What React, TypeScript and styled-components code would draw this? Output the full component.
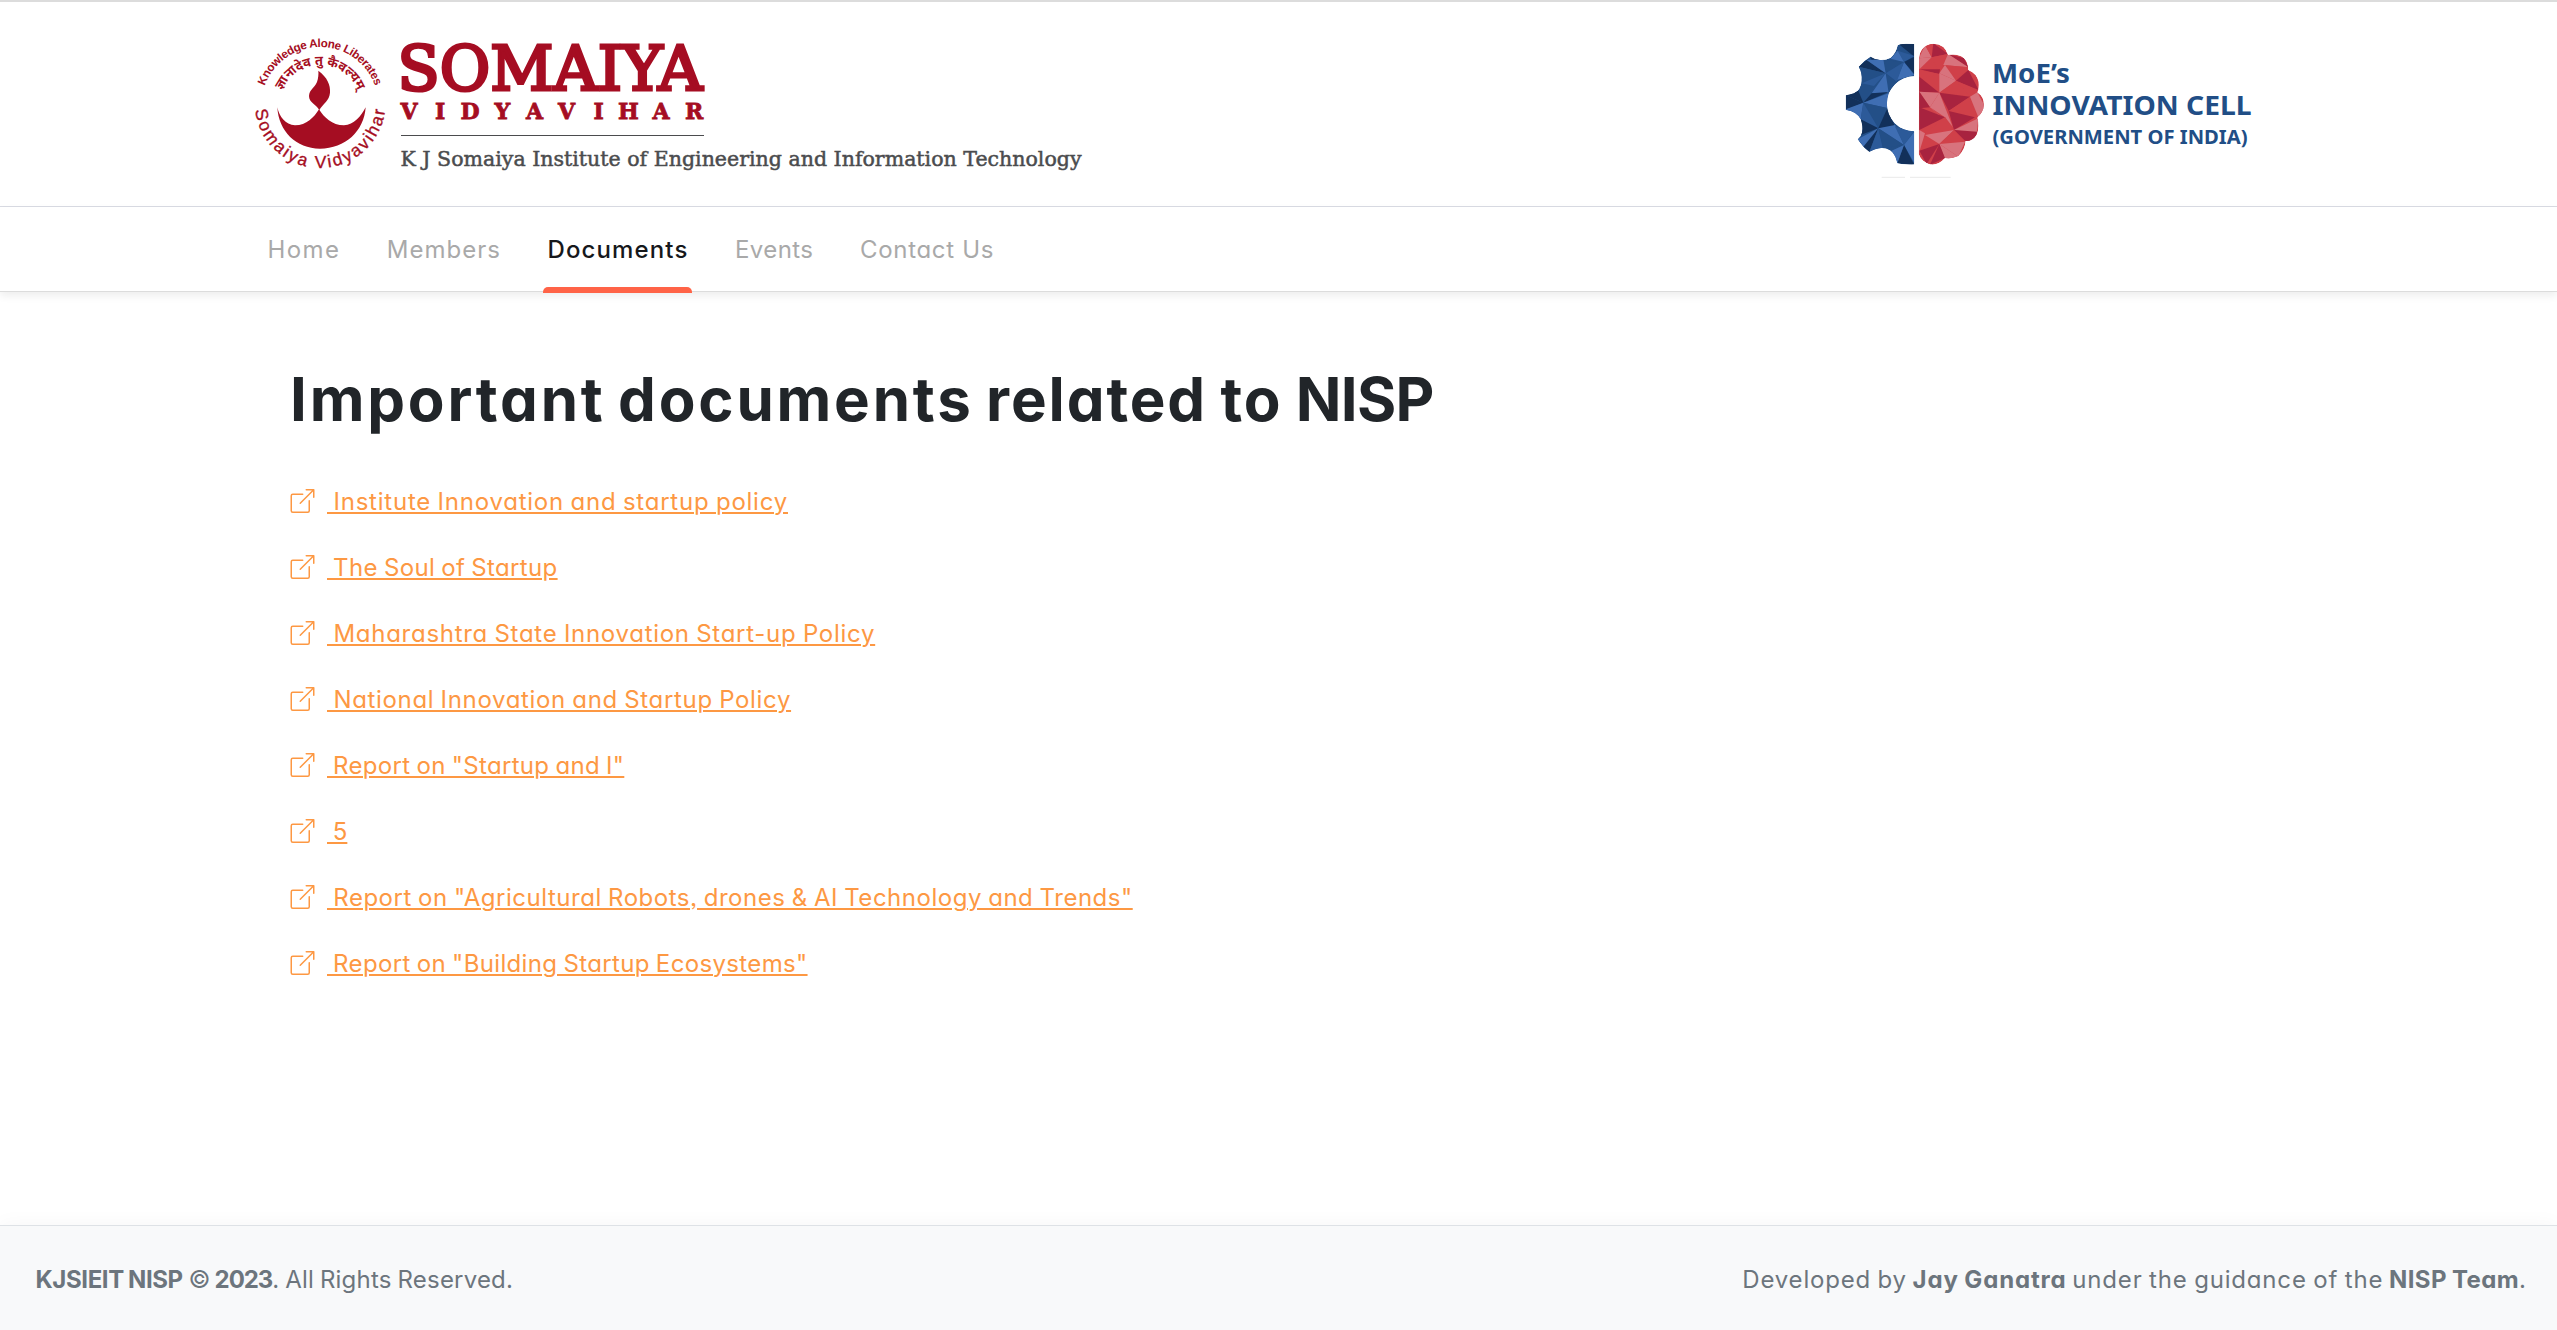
import React from 'react';
import styled, { createGlobalStyle } from 'styled-components';
import { BsBoxArrowUpRight } from 'react-icons/bs';

const GlobalStyle = createGlobalStyle`
  * { box-sizing: border-box; }
  body {
    margin: 0;
    background: #fff;
    color: #212529;
    font-family: Inter, "Noto Sans", sans-serif;
    font-size: 24px;
    font-feature-settings: "cv11", "ss03";
  }
`;

const Page = styled.div`
  display: flex;
  flex-direction: column;
  min-height: 100vh;
  border-top: 2px solid #dcdcdc;
`;

const Header = styled.header`
  display: flex;
  justify-content: space-between;
  align-items: flex-start;
  height: 205px;
  padding: 18px 287px 0 240px;
  border-bottom: 1px solid #d9dbe3;
`;

const Nav = styled.nav`
  display: flex;
  gap: 38.5px;
  height: 85px;
  padding-left: 263.5px;
  border-bottom: 1px solid #dcdcdc;
  box-shadow: 0 4px 8px rgba(0, 0, 0, 0.07);
`;

const NavLink = styled.a<{ $active?: boolean; $spacing: number }>`
  position: relative;
  display: flex;
  align-items: center;
  padding: 0 4px;
  color: ${(p) => (p.$active ? '#16181b' : '#a9a9a9')};
  font-weight: ${(p) => (p.$active ? 500 : 400)};
  letter-spacing: ${(p) => p.$spacing}px;
  text-decoration: none;

  &::after {
    content: ${(p) => (p.$active ? '""' : 'none')};
    position: absolute;
    left: 0;
    right: 0;
    bottom: -2px;
    height: 6px;
    border-radius: 5px 5px 0 0;
    background: #ff6347;
  }
`;

const Main = styled.main`
  flex: 1;
  padding: 62px 290px 0;
`;

const Title = styled.h1`
  margin: 0 0 24px;
  font-size: 60px;
  font-weight: 700;
  line-height: 90px;
  white-space: nowrap;
`;

const Tracked = styled.span<{ $spacing: number; $words?: number }>`
  letter-spacing: ${(p) => p.$spacing}px;
  word-spacing: ${(p) => p.$words ?? 0}px;
`;

const DocList = styled.ul`
  margin: 0;
  padding: 0;
  list-style: none;
`;

const DocItem = styled.li`
  display: flex;
  align-items: center;
  gap: 12px;
  height: 66px;
  color: #fd9843;
`;

const DocIcon = styled(BsBoxArrowUpRight)`
  width: 25px;
  height: 24px;
`;

const DocLink = styled.a<{ $spacing: number }>`
  color: inherit;
  font-weight: 400;
  letter-spacing: ${(p) => p.$spacing}px;
  word-spacing: -1px;
  text-decoration: underline;
  text-decoration-thickness: 2px;
  text-underline-offset: 2px;
  white-space: pre;
`;

const Footer = styled.footer`
  display: flex;
  justify-content: space-between;
  align-items: center;
  height: 105px;
  padding: 3px 31px 0 35.5px;
  border-top: 1px solid #dee2e6;
  background: #f8f9fa;
  box-shadow: 0 0 20px rgba(0, 0, 0, 0.04);
  color: #6c757d;
  word-spacing: -1px;
`;

const FooterText = styled.p`
  margin: 0;
  white-space: nowrap;
`;

const FooterStrong = styled.strong<{ $spacing: number }>`
  font-weight: 700;
  letter-spacing: ${(p) => p.$spacing}px;
`;

const RED = '#a50d22';
const NAVY = '#214e86';

const SomaiyaLogo = () => (
  <svg width="860" height="160" viewBox="0 0 860 160">
    <g transform="scale(0.33333)" fill={RED}>
      <defs>
        <path id="motto" d="M64 257 A176 176 0 0 1 416 257" />
        <path id="verse" d="M118 257 A122 122 0 0 1 362 257" />
        <path id="ring" d="M45 262 A196 196 0 0 0 436 262" />
      </defs>
      <text fontFamily="Liberation Sans, sans-serif" fontWeight="700" fontSize="35">
        <textPath href="#motto" startOffset="50%" textAnchor="middle" textLength="432">Knowledge Alone Liberates</textPath>
      </text>
      <text fontFamily="Noto Sans, sans-serif" fontWeight="700" fontSize="39">
        <textPath href="#verse" startOffset="50%" textAnchor="middle">ज्ञानादेव तु कैवल्यम्</textPath>
      </text>
      <text fontFamily="Liberation Sans, sans-serif" fontSize="52" stroke={RED} strokeWidth="1">
        <textPath href="#ring" startOffset="50%" textAnchor="middle" textLength="572">Somaiya Vidyavihar</textPath>
      </text>
      <path d="M235 152 C262 172 272 195 270 218 C268 242 250 250 238 270 C228 252 207 248 207 228 C208 208 224 204 231 186 C235 174 236 163 235 152Z" />
      <path d="M112 262 C118 290 136 315 165 316 C200 316 222 292 237 268 C252 292 276 316 312 316 C342 315 362 290 377 262 C372 334 316 386 240 386 C168 386 116 334 112 262Z" />
    </g>
    <g fontFamily="DejaVu Serif, serif" fill={RED} stroke={RED}>
      <text x="157.5" y="69.5" fontSize="62" strokeWidth="3.2" textLength="305" lengthAdjust="spacingAndGlyphs">SOMAIYA</text>
      <text x="160.5 195 220.5 254.5 286 318 353.5 378 412.5 445" y="98.7" fontSize="22" fontWeight="700" strokeWidth="0.8">VIDYAVIHAR</text>
    </g>
    <path d="M161 115.5H464" stroke="#4b4c4e" strokeWidth="1.2" />
    <text x="160.5" y="145.5" fontFamily="DejaVu Serif, serif" fontSize="20.6" fill="#4b4c4e" stroke="#4b4c4e" strokeWidth="0.5" textLength="681" lengthAdjust="spacingAndGlyphs">
      K J Somaiya Institute of Engineering and Information Technology
    </text>
  </svg>
);

const GEAR =
  'M253 42L228 41Q210 42 203 46Q198 70 182 83Q165 92 150 90Q133 88 121 80Q100 92 86 110Q97 128 95 152Q92 180 72 190Q58 195 47 196L47 240Q80 244 92 268Q100 290 96 308Q92 320 83 328Q98 352 118 366Q135 355 155 354Q185 356 196 380Q200 392 202 400Q225 405 253 403L253 304A82 82 0 0 1 253 139Z';
const BRAIN =
  'M267 85Q270 45 310 41Q345 42 354 75Q385 70 402 85Q415 98 415 120Q440 130 446 155Q448 175 442 187Q462 200 462 225Q460 250 442 262Q450 290 440 315Q425 335 407 333Q405 360 385 378Q365 388 345 384Q330 402 308 404Q275 400 266 372Z';

const gearFacets: [string, string][] = [
  ['203,40 253,40 253,80', '#12305a'],
  ['203,62 253,78 222,96', '#2c5a99'],
  ['203,62 222,96 182,86', '#3f6eb3'],
  ['222,96 253,80 253,132', '#12305a'],
  ['222,96 253,135 200,150', '#3f6eb3'],
  ['160,90 222,96 167,130', '#234f87'],
  ['167,130 222,96 200,155', '#2c5a99'],
  ['120,78 152,90 130,102', '#12305a'],
  ['86,110 110,90 167,130', '#12305a'],
  ['110,90 160,88 167,130', '#3f6eb3'],
  ['86,110 167,130 95,160', '#234f87'],
  ['95,160 167,130 132,168', '#2c5a99'],
  ['167,130 132,175 100,215', '#3f6eb3'],
  ['167,130 200,155 175,190', '#234f87'],
  ['167,130 176,188 125,190', '#3f6eb3'],
  ['100,218 125,190 176,186', '#12305a'],
  ['47,196 85,182 100,218', '#12305a'],
  ['47,196 100,218 47,240', '#12305a'],
  ['47,238 100,218 92,268', '#3f6eb3'],
  ['100,218 175,190 175,235', '#3f6eb3'],
  ['100,218 175,235 145,295', '#234f87'],
  ['100,218 145,295 92,268', '#2c5a99'],
  ['92,268 145,295 92,315', '#12305a'],
  ['145,295 172,235 195,290', '#12305a'],
  ['145,295 195,285 222,345', '#3f6eb3'],
  ['83,328 145,295 105,355', '#3f6eb3'],
  ['145,295 118,366 100,350', '#12305a'],
  ['145,295 118,366 158,354', '#2c5a99'],
  ['145,295 222,345 160,355', '#234f87'],
  ['195,290 253,303 222,345', '#2c5a99'],
  ['253,305 253,400 222,345', '#3f6eb3'],
  ['222,345 253,405 202,400', '#12305a'],
  ['222,345 202,400 185,362', '#3f6eb3'],
];

const brainFacets: [string, string][] = [
  ['267,85 285,45 305,82', '#d8737d'],
  ['285,45 310,40 305,82', '#d04049'],
  ['310,40 354,72 305,82', '#a8233f'],
  ['305,82 354,72 328,130', '#d04049'],
  ['267,85 305,82 268,118', '#d8737d'],
  ['268,118 330,118 328,132', '#a8233f'],
  ['268,120 328,132 268,150', '#d04049'],
  ['354,72 402,85 415,112', '#a8233f'],
  ['354,72 415,112 340,105', '#d8737d'],
  ['340,105 415,112 378,152', '#d04049'],
  ['328,130 345,105 378,152', '#d8737d'],
  ['328,130 378,152 328,188', '#d8737d'],
  ['378,152 415,120 446,180', '#a8233f'],
  ['378,152 446,182 420,200', '#d04049'],
  ['268,140 328,188 268,185', '#a8233f'],
  ['268,185 328,188 300,232', '#d8737d'],
  ['268,185 300,232 268,235', '#a8233f'],
  ['328,188 378,152 420,200', '#d04049'],
  ['328,188 420,200 356,243', '#a8233f'],
  ['356,243 420,200 445,265', '#d04049'],
  ['420,200 442,187 465,230 445,262', '#d8737d'],
  ['300,232 328,188 368,290', '#d8737d'],
  ['356,243 435,262 372,300', '#a8233f'],
  ['300,232 368,290 345,262', '#d04049'],
  ['268,232 345,262 268,300', '#a8233f'],
  ['268,325 345,262 372,300', '#d04049'],
  ['372,300 445,265 440,310', '#d8737d'],
  ['372,300 442,305 430,335 405,332', '#a8233f'],
  ['268,300 285,310 268,365', '#d8737d'],
  ['285,315 372,300 328,342', '#d8737d'],
  ['328,342 372,300 405,335', '#d04049'],
  ['328,342 405,335 385,380', '#d8737d'],
  ['268,362 328,342 290,402', '#a8233f'],
  ['328,342 385,380 345,388', '#d8737d'],
  ['328,342 345,384 300,404', '#a8233f'],
];

const InnovationCellLogo = () => (
  <svg width="430" height="160" viewBox="0 0 430 160">
    <defs>
      <clipPath id="gearClip"><path d={GEAR} /></clipPath>
      <clipPath id="brainClip"><path d={BRAIN} /></clipPath>
    </defs>
    <g transform="translate(-10 10) scale(0.33333)">
      <g clipPath="url(#gearClip)">
        <path d={GEAR} fill="#234f87" />
        {gearFacets.map(([points, fill]) => <polygon key={points} points={points} fill={fill} />)}
      </g>
      <g clipPath="url(#brainClip)">
        <path d={BRAIN} fill="#d04049" />
        {brainFacets.map(([points, fill]) => <polygon key={points} points={points} fill={fill} />)}
      </g>
      <path d="M155 442H225M240 442H362" stroke="#e9e9e9" strokeWidth="3" />
    </g>
    <g fontFamily="Noto Sans, sans-serif" fontWeight="700" fill={NAVY}>
      <text x="152" y="63" fontSize="26.5" textLength="78" lengthAdjust="spacingAndGlyphs">MoE’s</text>
      <text x="152.5" y="95.3" fontSize="27.5" textLength="259" lengthAdjust="spacingAndGlyphs">INNOVATION CELL</text>
      <text x="152.5" y="123.7" fontSize="20" textLength="255" lengthAdjust="spacingAndGlyphs">(GOVERNMENT OF INDIA)</text>
    </g>
  </svg>
);

const navLinks = [
  { label: 'Home', spacing: 1.4 },
  { label: 'Members', spacing: 1 },
  { label: 'Documents', spacing: 1.13, active: true },
  { label: 'Events', spacing: 0.43 },
  { label: 'Contact Us', spacing: 0.7 },
];

const documents = [
  { label: 'Institute Innovation and startup policy', spacing: 0.77 },
  { label: 'The Soul of Startup', spacing: 0.35 },
  { label: 'Maharashtra State Innovation Start-up Policy', spacing: 0.72 },
  { label: 'National Innovation and Startup Policy', spacing: 0.66 },
  { label: 'Report on "Startup and I"', spacing: 0.32 },
  { label: '5', spacing: 0 },
  { label: 'Report on "Agricultural Robots, drones & AI Technology and Trends"', spacing: 0.52 },
  { label: 'Report on "Building Startup Ecosystems"', spacing: 0.35 },
];

export default function App() {
  return (
    <Page>
      <GlobalStyle />
      <Header>
        <SomaiyaLogo />
        <InnovationCellLogo />
      </Header>
      <Nav>
        {navLinks.map((link) => (
          <NavLink key={link.label} $spacing={link.spacing} $active={link.active}>{link.label}</NavLink>
        ))}
      </Nav>
      <Main>
        <Title>
          <Tracked $spacing={2.8} $words={-4.5}>Important documents </Tracked>
          <Tracked $spacing={1.9} $words={-2.8}>related to </Tracked>
          <Tracked $spacing={-0.7}>NISP</Tracked>
        </Title>
        <DocList>
          {documents.map((doc) => (
            <DocItem key={doc.label}>
              <DocIcon />
              <DocLink $spacing={doc.spacing}>{'\u00a0' + doc.label}</DocLink>
            </DocItem>
          ))}
        </DocList>
      </Main>
      <Footer>
        <FooterText>
          <FooterStrong $spacing={-0.4}>KJSIEIT NISP</FooterStrong> <Tracked $spacing={-1.3}>© </Tracked>
          <FooterStrong $spacing={-1.1}>2023</FooterStrong>
          <Tracked $spacing={0.2} $words={-1}>. All Rights Reserved.</Tracked>
        </FooterText>
        <FooterText>
          <Tracked $spacing={0.8} $words={-1}>Developed by</Tracked> <FooterStrong $spacing={0.85}>Jay Ganatra</FooterStrong>{' '}
          <Tracked $spacing={0.82} $words={-1}>under the guidance of the</Tracked> <FooterStrong $spacing={0.4}>NISP Team</FooterStrong>.
        </FooterText>
      </Footer>
    </Page>
  );
}
